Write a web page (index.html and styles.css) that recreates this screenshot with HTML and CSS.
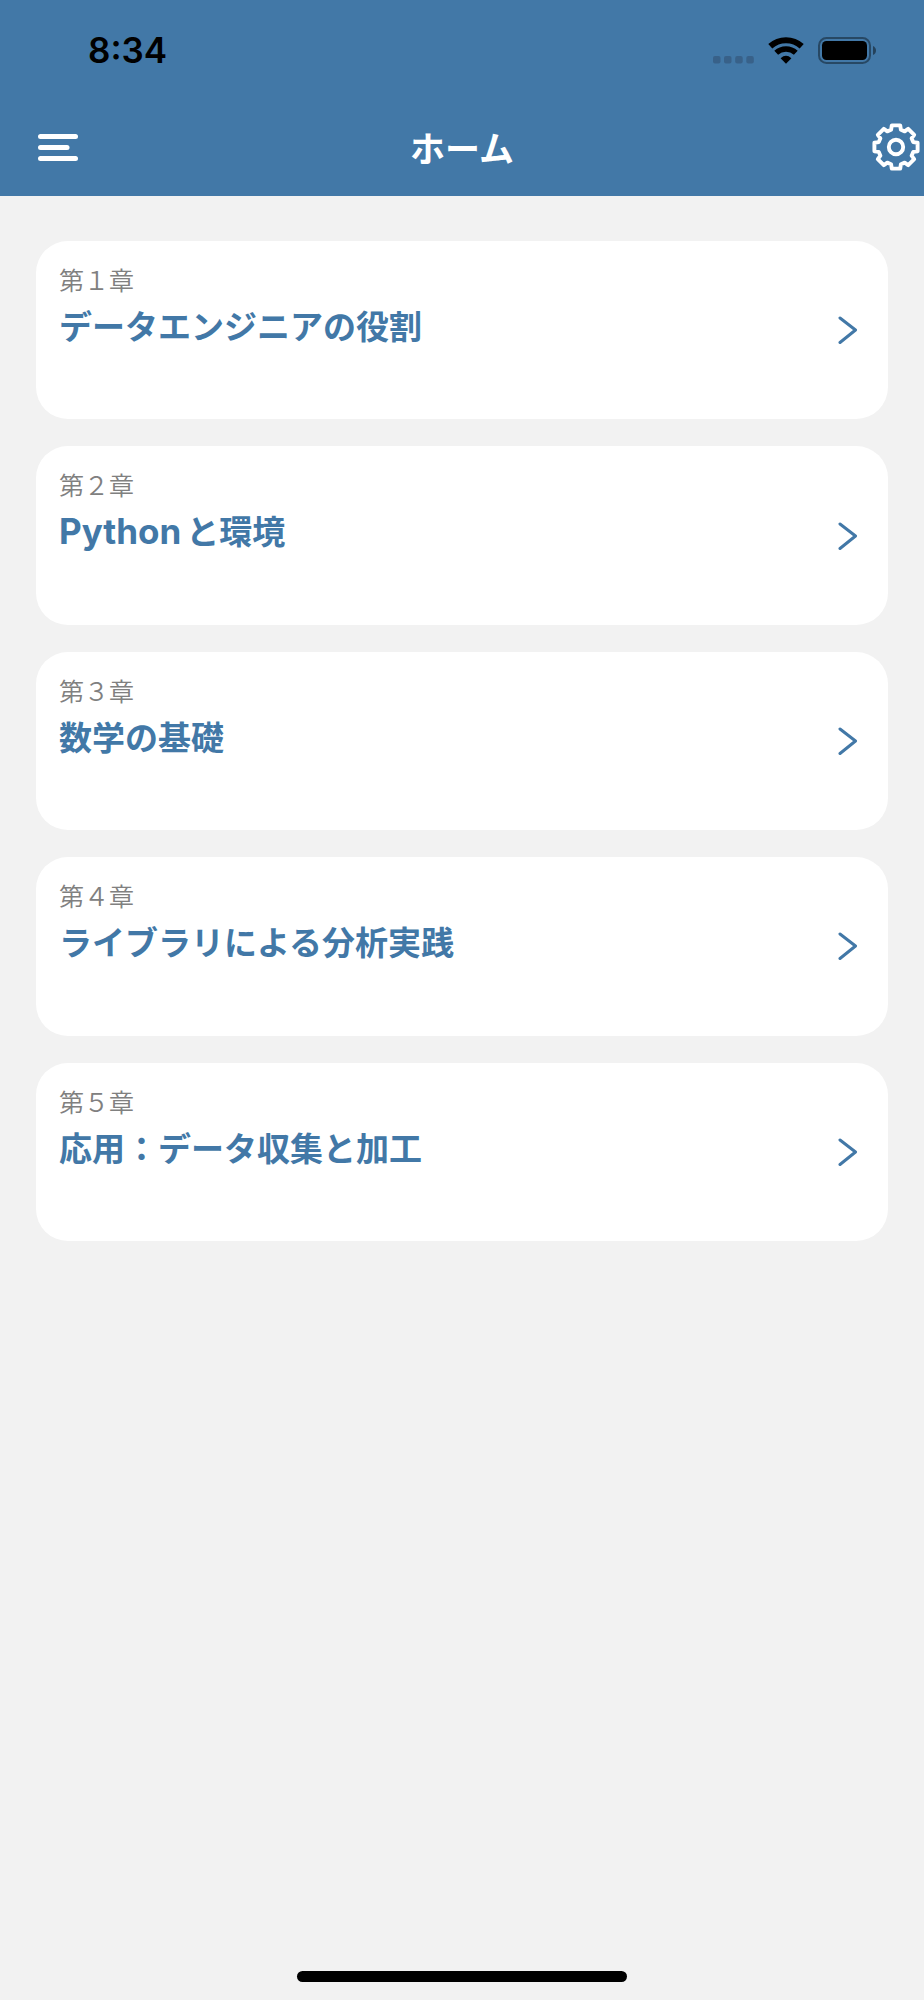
FILE: index.html
```html
<!DOCTYPE html>
<html lang="ja">
<head>
<meta charset="utf-8">
<meta name="viewport" content="width=device-width, initial-scale=1">
<title>ホーム</title>
<link rel="stylesheet" href="styles.css">
</head>
<body>
<div class="screen">
  <header class="header">
    <div class="status">
      <time class="status-time">8:34</time>
      <div class="status-icons">
        <svg class="cellular" width="41" height="27" viewBox="0 0 41 27" aria-hidden="true">
          <rect x="0" y="19" width="7.5" height="7.5" rx="2"/><rect x="11" y="19" width="7.5" height="7.5" rx="2"/><rect x="22.2" y="19" width="7.5" height="7.5" rx="2"/><rect x="33.3" y="19" width="7.5" height="7.5" rx="2"/>
        </svg>
        <svg width="36" height="27" viewBox="0 0 36 27" aria-hidden="true">
          <path d="M2.3 9.3A23.3 23.3 0 0 1 33.7 9.3" fill="none" stroke="#000" stroke-width="6"/>
          <path d="M8.2 15.8A14.5 14.5 0 0 1 27.8 15.8" fill="none" stroke="#000" stroke-width="5.6"/>
          <path d="M18 26.8L12.6 21.2Q18 16.4 23.4 21.2Z"/>
        </svg>
        <svg width="59" height="27" viewBox="0 0 59 27" aria-hidden="true">
          <rect x="1" y="1" width="51" height="25" rx="7.5" fill="none" stroke="#000" stroke-opacity=".4" stroke-width="2"/>
          <rect x="4" y="4" width="45" height="19" rx="4.5"/>
          <path d="M55 9Q58 10.5 58 13.5Q58 16.5 55 18Z" fill-opacity=".45"/>
        </svg>
      </div>
    </div>
    <nav class="nav">
      <button class="nav-button menu" type="button" aria-label="メニュー">
        <svg width="40" height="28" viewBox="0 0 40 28" fill="#fff" aria-hidden="true">
          <rect x="0" y="1" width="40" height="5" rx="2.5"/><rect x="0" y="12" width="31.5" height="5" rx="2.5"/><rect x="0" y="23" width="40" height="5" rx="2.5"/>
        </svg>
      </button>
      <h1 class="nav-title">ホーム</h1>
      <button class="nav-button settings" type="button" aria-label="設定">
        <svg width="48" height="48" viewBox="-24 -24 48 48" fill="none" stroke="#fff" stroke-width="3.9" stroke-linejoin="round" aria-hidden="true">
          <path d="M-4.9 -17.2L-4.2 -21.6H4.2L4.9 -17.2L8.7 -15.6L12.2 -18.2L18.2 -12.2L15.6 -8.7L17.2 -4.9L21.6 -4.2V4.2L17.2 4.9L15.6 8.7L18.2 12.2L12.2 18.2L8.7 15.6L4.9 17.2L4.2 21.6H-4.2L-4.9 17.2L-8.7 15.6L-12.2 18.2L-18.2 12.2L-15.6 8.7L-17.2 4.9L-21.6 4.2V-4.2L-17.2 -4.9L-15.6 -8.7L-18.2 -12.2L-12.2 -18.2L-8.7 -15.6Z"/>
          <circle r="7.2"/>
        </svg>
      </button>
    </nav>
  </header>
  <main class="chapters">
    <a class="card" href="#chapter-1">
      <span class="card-text"><span class="card-label">第１章</span><span class="card-title">データエンジニアの役割</span></span>
      <svg class="chevron" width="20" height="28" viewBox="0 0 20 28" aria-hidden="true"><path d="M2 2L17.5 14L2 26.5"/></svg>
    </a>
    <a class="card" href="#chapter-2">
      <span class="card-text"><span class="card-label">第２章</span><span class="card-title"><span class="latin">Python</span>と環境</span></span>
      <svg class="chevron" width="20" height="28" viewBox="0 0 20 28" aria-hidden="true"><path d="M2 2L17.5 14L2 26.5"/></svg>
    </a>
    <a class="card" href="#chapter-3">
      <span class="card-text"><span class="card-label">第３章</span><span class="card-title">数学の基礎</span></span>
      <svg class="chevron" width="20" height="28" viewBox="0 0 20 28" aria-hidden="true"><path d="M2 2L17.5 14L2 26.5"/></svg>
    </a>
    <a class="card" href="#chapter-4">
      <span class="card-text"><span class="card-label">第４章</span><span class="card-title">ライブラリによる分析実践</span></span>
      <svg class="chevron" width="20" height="28" viewBox="0 0 20 28" aria-hidden="true"><path d="M2 2L17.5 14L2 26.5"/></svg>
    </a>
    <a class="card" href="#chapter-5">
      <span class="card-text"><span class="card-label">第５章</span><span class="card-title">応用：データ収集と加工</span></span>
      <svg class="chevron" width="20" height="28" viewBox="0 0 20 28" aria-hidden="true"><path d="M2 2L17.5 14L2 26.5"/></svg>
    </a>
  </main>
  <footer class="home-area"><div class="home-indicator"></div></footer>
</div>
</body>
</html>
```
FILE: styles.css
```css
* {
  box-sizing: border-box;
}

body {
  margin: 0;
  background: #f2f2f2;
  font-family: "Noto Sans CJK JP", sans-serif;
}

.screen {
  display: flex;
  flex-direction: column;
  min-height: 100vh;
}

.header {
  padding-bottom: 2px;
  background: #4278a7;
}

.status {
  display: flex;
  align-items: center;
  justify-content: space-between;
  height: 100px;
  padding: 0 47px 0 88px;
}

.status-time {
  font: 600 35px/44px Inter, sans-serif;
  color: #000;
}

.status-icons {
  display: flex;
  align-items: center;
  gap: 14px;
}

.cellular {
  fill: #386189;
}

.nav {
  display: grid;
  grid-template-columns: 1fr auto 1fr;
  align-items: center;
  height: 94px;
}

.nav-button {
  display: flex;
  align-items: center;
  height: 64px;
  border: 0;
  background: none;
  cursor: pointer;
}

.menu {
  justify-self: start;
  padding: 0 12px 0 38px;
}

.settings {
  justify-self: end;
  padding: 0 4px 0 12px;
}

.nav-title {
  margin: 0;
  font-size: 35px;
  line-height: 44px;
  font-weight: 700;
  color: #fff;
}

.chapters {
  display: grid;
  grid-auto-rows: 1fr;
  gap: 27px;
  min-height: 1000px;
  margin: 45px 36px;
}

.card {
  display: flex;
  align-items: center;
  justify-content: space-between;
  padding: 0 30px 0 23px;
  border-radius: 32px;
  background: #fff;
  text-decoration: none;
}

.card-text {
  display: flex;
  flex-direction: column;
  align-self: flex-start;
  gap: 9px;
  padding-top: 23px;
}

.card-label {
  font-size: 25px;
  line-height: 30px;
  font-weight: 350;
  color: #808080;
}

.card-title {
  font-size: 33px;
  line-height: 44px;
  font-weight: 700;
  color: #4278a7;
}

.latin {
  margin-right: 5px;
  font-family: Inter, sans-serif;
  font-size: 35px;
}

.chevron {
  flex: none;
  fill: none;
  stroke: #4278a7;
  stroke-width: 3;
  stroke-linecap: round;
  stroke-linejoin: round;
}

.home-area {
  display: flex;
  justify-content: center;
  margin-top: auto;
  padding-bottom: 18px;
}

.home-indicator {
  width: 330px;
  height: 11px;
  border-radius: 6px;
  background: #000;
}
```
